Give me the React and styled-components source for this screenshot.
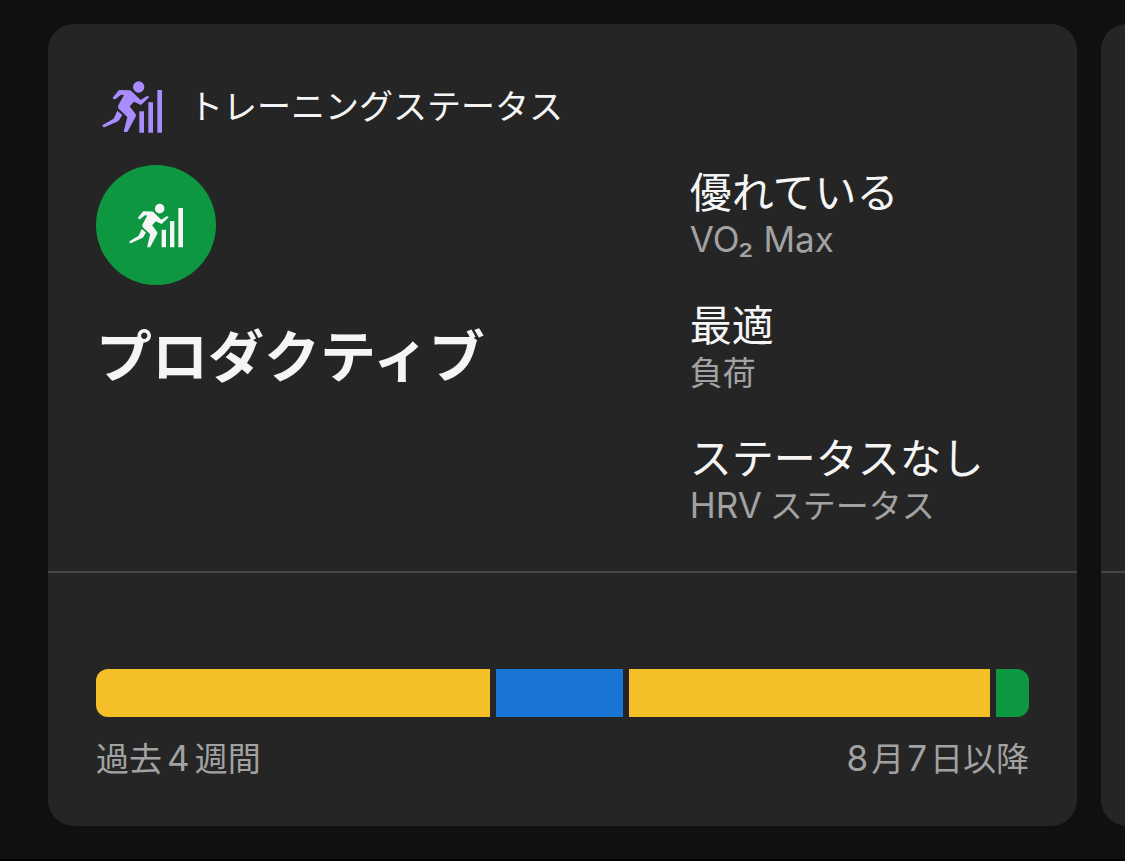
import styled, { createGlobalStyle } from 'styled-components';

const GlobalStyle = createGlobalStyle`
  *, *::before, *::after {
    box-sizing: border-box;
  }

  body {
    margin: 0;
    background: #101010;
    color: #f5f5f5;
    font-family: 'Noto Sans CJK JP', sans-serif;
    overflow-x: hidden;
  }
`;

const Carousel = styled.main`
  display: grid;
  grid-template-rows: auto auto;
  grid-auto-flow: column;
  grid-auto-columns: calc(100vw - 96px);
  column-gap: 24px;
  padding: 24px 48px 33px;
  border-bottom: 2px solid #000000;
  overflow: hidden;
`;

const Card = styled.section`
  display: grid;
  grid-row: span 2;
  grid-template-rows: subgrid;
  border-radius: 26px;
  background: #252525;
`;

const Summary = styled.div`
  padding: 45px 48px 44px;
`;

const History = styled.div`
  padding: 96px 48px 45px;
  border-top: 2px solid #464646;
`;

const Header = styled.header`
  display: flex;
  align-items: center;
  gap: 21px;
  margin-bottom: 24px;
  color: #a98cff;
`;

const Title = styled.h2`
  margin: 0;
  color: #f5f5f5;
  font-size: 34px;
  font-weight: 400;
  line-height: 48px;
`;

const Columns = styled.div`
  display: grid;
  grid-template-columns: 7fr 4fr;
`;

const Badge = styled.div`
  display: flex;
  align-items: center;
  justify-content: center;
  width: 120px;
  height: 120px;
  margin-bottom: 32px;
  border-radius: 50%;
  background: #0d9740;
`;

const Status = styled.p`
  margin: 0;
  font-size: 56px;
  font-weight: 700;
  line-height: 72px;
`;

const Metrics = styled.dl`
  display: flex;
  flex-direction: column;
  gap: 37px;
  margin: 0;
`;

const Metric = styled.div`
  display: flex;
  flex-direction: column-reverse;
`;

const Value = styled.dd`
  margin: 0;
  font-size: 42px;
  line-height: 50px;
  white-space: nowrap;
`;

const Label = styled.dt`
  color: #a2a2a2;
  font-size: 33px;
  line-height: 46px;
  white-space: nowrap;
`;

const Latin = styled.span`
  font-family: Inter, sans-serif;
  font-size: 35px;
  line-height: 1;
  margin-left: ${({ $before = 0 }) => $before}px;
  margin-right: ${({ $after = 0 }) => $after}px;
`;

const Bar = styled.div`
  display: flex;
  gap: 6px;
  height: 48px;
  border-radius: 12px;
  overflow: hidden;
`;

const Segment = styled.div`
  flex: ${({ $share }) => $share} 1 0;
  background: ${({ $color }) => $color};
`;

const Range = styled.div`
  display: flex;
  justify-content: space-between;
  margin-top: 16px;
  color: #a2a2a2;
  font-size: 33px;
  line-height: 48px;
`;

const segments = [
  { share: 394, color: '#f5bf2a' },
  { share: 127, color: '#1a76d4' },
  { share: 361, color: '#f5bf2a' },
  { share: 33, color: '#0d9740' },
];

function Runner() {
  return (
    <>
      <circle cx="146" cy="51" r="17" />
      <path d="M68 83 87 60 119 61Q123 61 127 66L152 90 172 77 178 81 153 105 132 95 119 109 137 133Q139 136 137 140L112 186H102V181L112 141 86 116Q82 112 85 106L102 75 93 74 77 87Q71 90 68 83Z" />
      <path d="M82 122 97 135 87 151Q85 154 81 155L43 172Q36 171 38 165L71 146Z" />
    </>
  );
}

function HeaderIcon() {
  return (
    <svg width="72" height="72" viewBox="18 -3 216 216" fill="currentColor" aria-hidden="true">
      <Runner />
      <path d="M148 124h14v64h-14zM175 97h14v91h-14zM202 60h14v128h-14z" />
    </svg>
  );
}

function BadgeIcon() {
  return (
    <svg width="64" height="64" viewBox="102 99 192 192" fill="currentColor" aria-hidden="true">
      <g transform="translate(86.4 102.4) scale(0.84 0.855)">
        <Runner />
      </g>
      <path d="M215 209h13v53h-13zM240 183h13v79h-13zM265 144h14v118h-14z" />
    </svg>
  );
}

export default function App() {
  return (
    <>
      <GlobalStyle />
      <Carousel>
        <Card>
          <Summary>
            <Header>
              <HeaderIcon />
              <Title>トレーニングステータス</Title>
            </Header>
            <Columns>
              <div>
                <Badge>
                  <BadgeIcon />
                </Badge>
                <Status>プロダクティブ</Status>
              </div>
              <Metrics>
                <Metric>
                  <Label><Latin>VO₂ Max</Latin></Label>
                  <Value>優れている</Value>
                </Metric>
                <Metric>
                  <Label>負荷</Label>
                  <Value>最適</Value>
                </Metric>
                <Metric>
                  <Label><Latin $after={8}>HRV</Latin>ステータス</Label>
                  <Value>ステータスなし</Value>
                </Metric>
              </Metrics>
            </Columns>
          </Summary>
          <History>
            <Bar>
              {segments.map(({ share, color }, i) => (
                <Segment key={i} $share={share} $color={color} />
              ))}
            </Bar>
            <Range>
              <span>過去<Latin $before={5} $after={5}>4</Latin>週間</span>
              <span><Latin $after={3}>8</Latin>月<Latin $before={3} $after={3}>7</Latin>日以降</span>
            </Range>
          </History>
        </Card>
        <Card>
          <Summary />
          <History />
        </Card>
      </Carousel>
    </>
  );
}
